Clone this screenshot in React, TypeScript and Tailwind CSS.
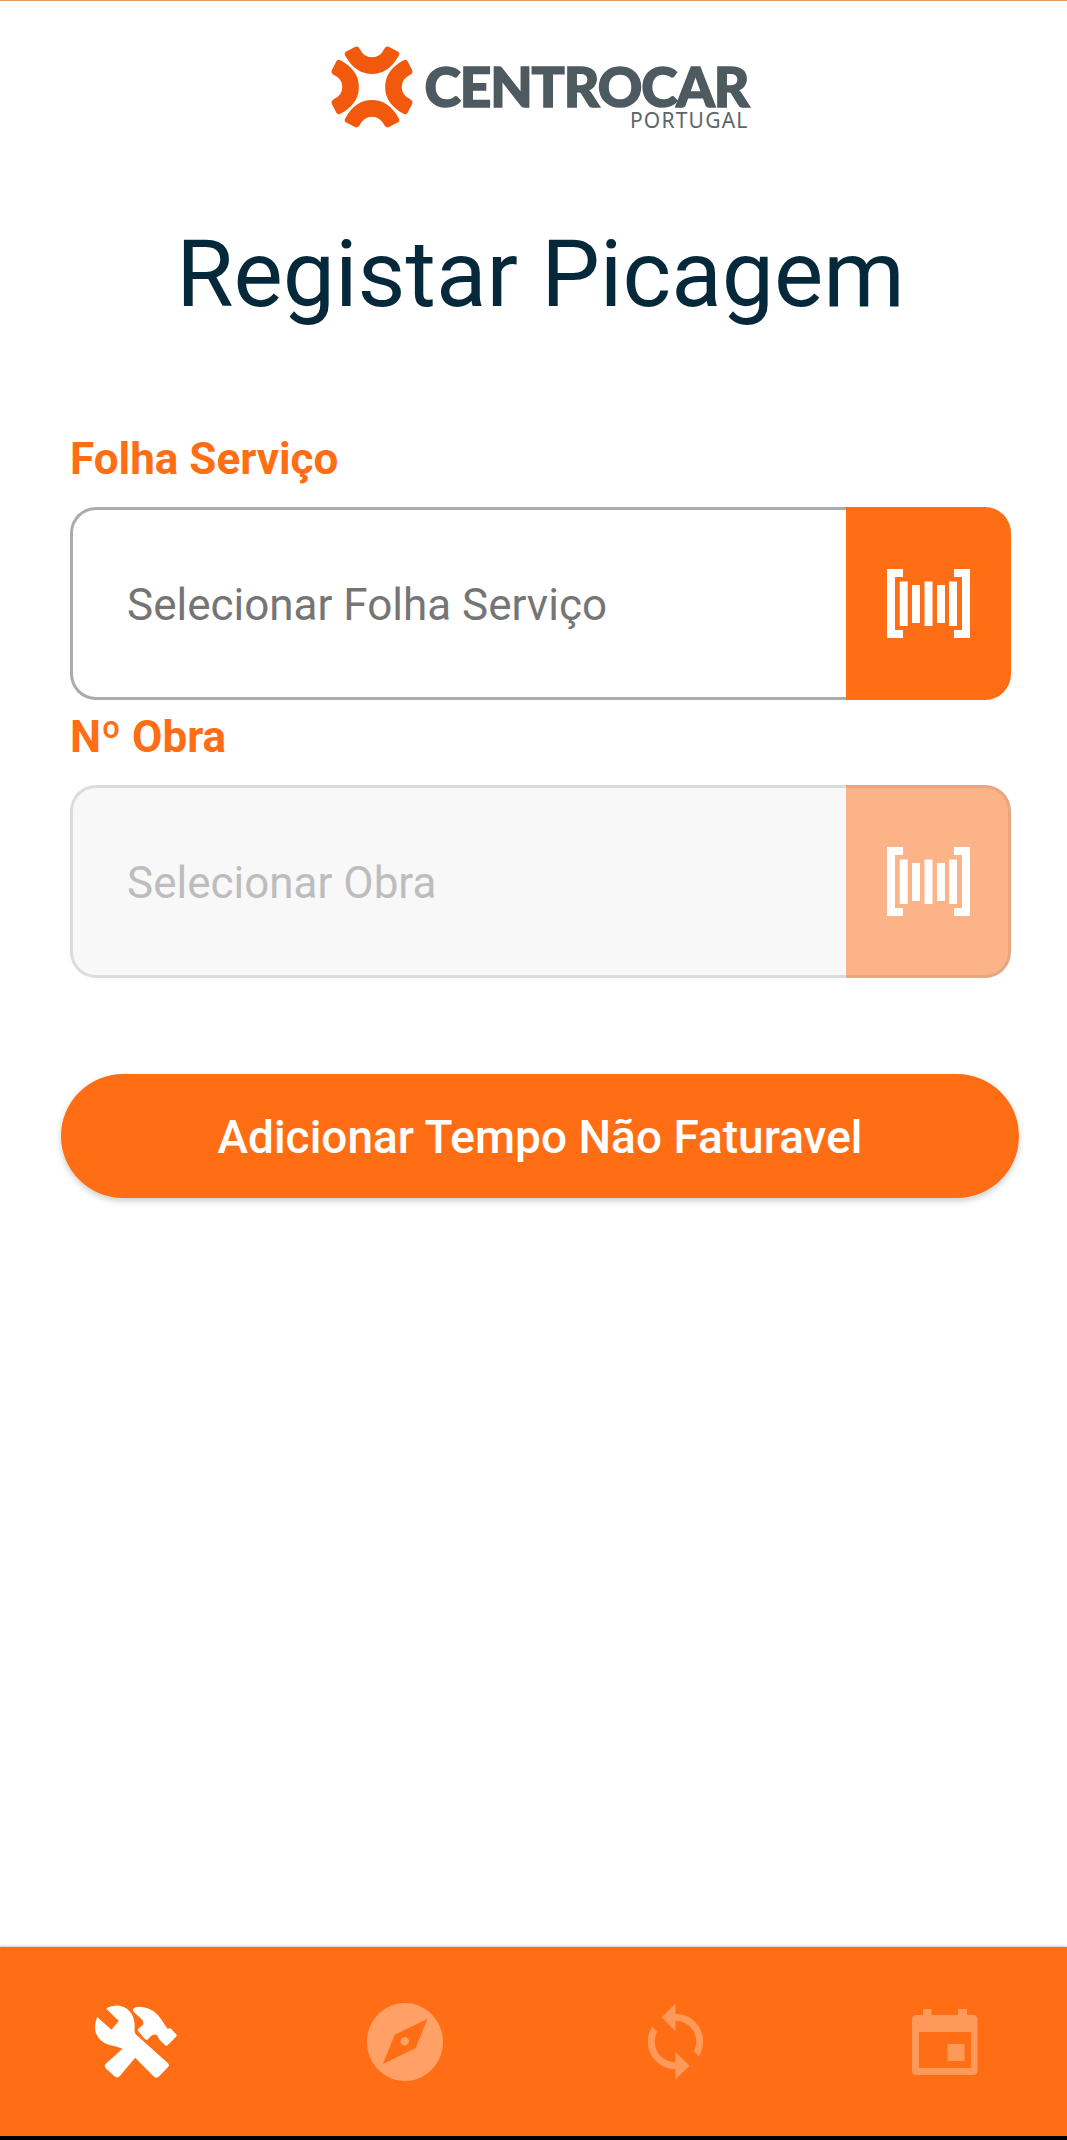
import { MdSync } from 'react-icons/md';

const BarcodeIcon = () => (
  <svg width="83" height="69" viewBox="0 0 83 69" fill="white">
    <path d="M0 0H16V8H8V61H16V69H0Z" />
    <path d="M83 0H67V8H75V61H67V69H83Z" />
    <rect x="12.7" y="12.5" width="8" height="44.5" />
    <rect x="25" y="16" width="8" height="38" />
    <rect x="37.5" y="12.5" width="8" height="44.5" />
    <rect x="50" y="16" width="8" height="38" />
    <rect x="62" y="12.5" width="8" height="44.5" />
  </svg>
);

const LogoMark = () => {
  const piece =
    'M136 155L165 140Q173 138 178 146Q190 172 215 172Q240 172 252 146Q257 138 265 140L294 155Q300 160 295 168Q265 222 215 222Q165 222 135 168Q130 160 136 155Z';
  return (
    <svg width="82" height="82" viewBox="92 138 246 247" fill="#f2590d">
      <path d={piece} />
      <path d={piece} transform="rotate(90 215 261.5)" />
      <path d={piece} transform="rotate(180 215 261.5)" />
      <path d={piece} transform="rotate(270 215 261.5)" />
    </svg>
  );
};

const ToolsIcon = () => (
  <svg width="95" height="90" viewBox="7.5 -10 285 270" fill="white">
    <path d="M62 25Q70 18 88 16Q118 14 135 36Q150 56 147 88Q146 97 152 103L246 187Q254 194 247 201L221 228Q212 236 204 228L149 172L103 227Q95 235 87 228L62 205Q54 197 61 190L111 145Q92 138 72 134Q44 126 32 100Q24 78 35 50L78 88L100 62Z" />
    <path d="M143 26Q150 18 170 20Q205 24 228 58Q238 74 246 85L255 84L272 102Q275 106 271 110L247 134Q243 138 238 134L222 118L214 104Q204 100 196 108L186 118Q180 120 176 114L158 92Q156 88 160 84L172 74Q176 66 170 58L146 36Q141 32 143 26Z" />
  </svg>
);

const CompassIcon = () => (
  <svg width="76" height="78" viewBox="0 0 76 78" fill="white" fillOpacity="0.35">
    <path
      fillRule="evenodd"
      d="M38 0C59 0 76 17.5 76 39S59 78 38 78 0 60.5 0 39 17 0 38 0ZM60.3 16L27.7 31.7 16 61 48.7 45ZM37.7 34A4.3 4.3 0 1 1 37.7 42.6 4.3 4.3 0 0 1 37.7 34Z"
    />
  </svg>
);

const CalendarIcon = () => (
  <svg width="66" height="66" viewBox="0 0 66 66" fill="white" fillOpacity="0.3">
    <path
      fillRule="evenodd"
      d="M11 6V0H19.5V6H46V0H55V6H61Q65.5 6 65.5 10.5V61.5Q65.5 66 61 66H4.5Q0 66 0 61.5V10.5Q0 6 4.5 6ZM7 23V59H59V23Z"
    />
    <rect x="35.5" y="35" width="17" height="17" />
  </svg>
);

const Field = ({ label, placeholder, disabled }: { label: string; placeholder: string; disabled?: boolean }) => (
  <div>
    <div className="text-[44px] leading-[52px] font-bold text-[#ff6e14]">{label}</div>
    <div className="mt-[22px] flex h-[193px]">
      <div
        className={`flex flex-1 items-center rounded-l-[26px] border-y-[3px] border-l-[3px] pl-[54px] pt-[2px] text-[44px] ${
          disabled ? 'border-[#dcdcdc] bg-[#f8f8f8] text-[#bdbdbd]' : 'border-[#ababab] bg-white text-[#757575]'
        }`}
      >
        {placeholder}
      </div>
      <div
        className={`flex w-[165px] items-center justify-center rounded-r-[26px] border-y-[3px] border-r-[3px] pl-[3px] ${
          disabled ? 'border-[#e8a680] bg-[#fbb387]' : 'border-[#ff6e14] bg-[#ff6e14]'
        }`}
      >
        <BarcodeIcon />
      </div>
    </div>
  </div>
);

export default function App() {
  return (
    <div className="flex h-[2140px] w-[1067px] flex-col overflow-hidden bg-white font-['Roboto',sans-serif]">
      <div className="h-[1px] bg-[#e39a63]" />
      <main className="flex-1">
        <div className="mt-[45px] flex justify-center pl-[12px]">
          <LogoMark />
          <div className="ml-[12px] flex flex-col items-end">
            <div className="mt-[15px] font-['Lato',sans-serif] text-[55px] leading-[50px] font-black tracking-[-1.1px] text-[#4d5a5f] [-webkit-text-stroke:1.5px_#4d5a5f]">
              CENTROCAR
            </div>
            <div className="font-['Noto_Sans',sans-serif] text-[21px] leading-[18px] tracking-[1.2px] text-[#5b666a]">
              PORTUGAL
            </div>
          </div>
        </div>
        <h1 className="mt-[90px] pl-[14px] text-center text-[93px] leading-[112px] text-[#05293b]">Registar Picagem</h1>
        <div className="mt-[102px] pl-[70px] pr-[56px]">
          <Field label="Folha Serviço" placeholder="Selecionar Folha Serviço" />
          <div className="mt-[11px]">
            <Field label="Nº Obra" placeholder="Selecionar Obra" disabled />
          </div>
        </div>
        <div className="ml-[61px] mr-[48px] mt-[96px] flex h-[124px] items-center justify-center rounded-full bg-[#ff6e14] pt-[2px] text-[46px] font-medium text-white shadow-[0_3px_6px_rgba(0,0,0,0.2)]">
          Adicionar Tempo Não Faturavel
        </div>
      </main>
      <nav className="flex h-[189px] items-center overflow-hidden bg-[#ff6e14] shadow-[0_-1px_2px_rgba(0,0,0,0.2)]">
        <div className="flex w-[270px] shrink-0 justify-center">
          <ToolsIcon />
        </div>
        <div className="flex w-[270px] shrink-0 justify-center">
          <CompassIcon />
        </div>
        <div className="flex w-[270px] shrink-0 justify-center">
          <MdSync className="text-[83px] text-white/30" />
        </div>
        <div className="flex w-[270px] shrink-0 justify-center">
          <CalendarIcon />
        </div>
      </nav>
      <div className="h-[4px] bg-black" />
    </div>
  );
}
